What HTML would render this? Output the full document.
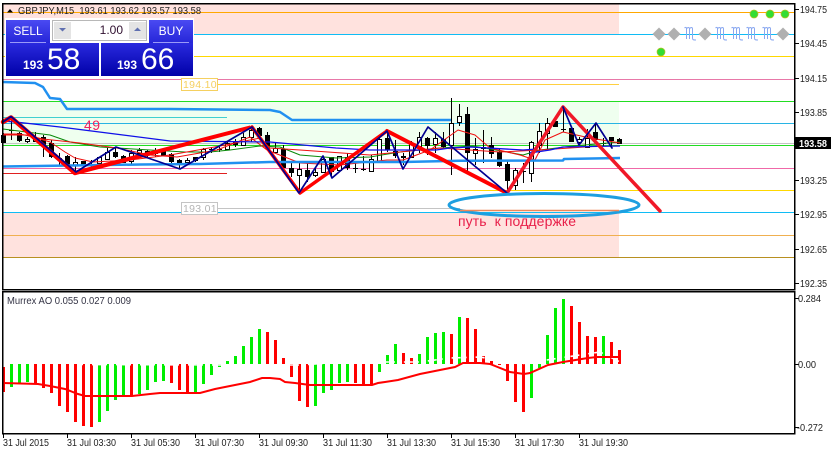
<!DOCTYPE html>
<html><head><meta charset="utf-8"><style>
html,body{margin:0;padding:0;background:#fff;width:833px;height:451px;overflow:hidden}
svg{display:block}
text{font-family:"Liberation Sans",sans-serif}
</style></head><body>
<svg width="833" height="451" viewBox="0 0 833 451" xmlns="http://www.w3.org/2000/svg">
<defs>
<linearGradient id="a" x1="0" y1="0" x2="0" y2="1"><stop offset="0" stop-color="#4a4af2"/><stop offset="1" stop-color="#2626d8"/></linearGradient>
<linearGradient id="b" x1="0" y1="0" x2="0" y2="1"><stop offset="0" stop-color="#2a2ade"/><stop offset="1" stop-color="#0000a8"/></linearGradient>
</defs>
<rect width="833" height="451" fill="#fff"/>
<g shape-rendering="crispEdges">
<rect x="3" y="4" width="616" height="30" fill="#ffe2de"/>
<rect x="3" y="212" width="616" height="46" fill="#ffe2de"/>
<rect x="3" y="101" width="616" height="44" fill="#efffef"/>
<g fill="none" stroke-width="1">
<path d="M3 12.5H794" stroke="#ffa800"/>
<path d="M3 34.5H794" stroke="#10bcf5"/>
<path d="M3 56.5H794" stroke="#ffd800"/>
<path d="M3 79.5H794" stroke="#e878a8"/>
<path d="M218 84.5H619" stroke="#ffd040"/>
<path d="M3 101.5H794" stroke="#22dd22"/>
<path d="M3 117.5H227" stroke="#40d0d0"/>
<path d="M3 123.5H794" stroke="#28b4e4"/>
<path d="M3 143.5H794" stroke="#c4c4c4"/>
<path d="M3 145.5H794" stroke="#22dd22"/>
<path d="M3 168.5H794" stroke="#f068a8"/>
<path d="M3 173.5H227" stroke="#e02020"/>
<path d="M3 190.5H794" stroke="#ffd800"/>
<path d="M218 208.5H460" stroke="#c4c4c4"/>
<path d="M3 212.5H794" stroke="#10bcf5"/>
<path d="M3 235.5H794" stroke="#f0b050"/>
<path d="M3 257.5H794" stroke="#b89020"/>
</g>
<path stroke="#000" fill="none" d="M3.5 133V143M11.5 117V140M19.5 132V142M27.5 137V143M35.5 132V142M43.5 135V157M51.5 140V158M59.5 153V165M67.5 155V167M75.5 157V172M83.5 161V168M91.5 160V169M99.5 157V165M107.5 148V160M115.5 147V158M123.5 155V163M131.5 150V165M139.5 148V155M147.5 150V157M155.5 148V157M163.5 150V156M171.5 153V163M179.5 159V168M187.5 158V163M195.5 157V162M203.5 148V160M211.5 147V153M219.5 147V152M227.5 142V150M235.5 139V147M243.5 133V146M251.5 127V142M259.5 127V137M267.5 132V150M275.5 142V153M283.5 145V168M291.5 162V177M299.5 162V190M307.5 163V182M315.5 167V177M323.5 156V172M331.5 157V178M339.5 156V170M347.5 153V170M355.5 163V173M363.5 156V171M371.5 155V172M379.5 138V162M387.5 132V152M395.5 140V158M403.5 153V165M411.5 141V158M419.5 132V153M427.5 137V155M435.5 132V153M443.5 132V148M451.5 98V175M459.5 104V126M467.5 107V172M475.5 138V165M483.5 130V163M491.5 137V158M499.5 148V167M507.5 160V192M515.5 168V190M523.5 163V183M531.5 141V182M539.5 123V153M547.5 118V150M555.5 117V127M563.5 107V132M571.5 128V142M579.5 137V145M587.5 129V147M595.5 123V140M603.5 138V146M611.5 137V147M619.5 138V144"/>
<path stroke="#000" stroke-width="5" fill="none" d="M3.5 135V143M11.5 130V131M19.5 133V141M43.5 137V145M51.5 143V157M59.5 158V159M67.5 156V165M83.5 161V165M91.5 164V165M115.5 152V157M123.5 156V163M147.5 151V155M155.5 153V154M163.5 151V156M171.5 154V162M179.5 160V164M195.5 157V161M211.5 149V150M219.5 149V150M235.5 141V145M259.5 128V136M267.5 135V149M283.5 149V168M291.5 168V173M307.5 170V177M331.5 157V172M347.5 157V168M355.5 168V169M363.5 169V170M387.5 138V150M395.5 151V156M403.5 156V158M427.5 138V146M443.5 139V147M467.5 114V153M483.5 147V149M491.5 145V154M499.5 152V166M507.5 164V181M523.5 171V172M555.5 121V127M563.5 129V130M571.5 128V142M595.5 132V140M603.5 143V144M611.5 137V141M619.5 139V144"/>
<path fill="#fff" stroke="#000" d="M25.5 139.5h4v2h-4zM33.5 138.5h4v3h-4zM73.5 162.5h4v3h-4zM97.5 157.5h4v6h-4zM105.5 152.5h4v7h-4zM129.5 153.5h4v8h-4zM137.5 150.5h4v3h-4zM185.5 160.5h4v2h-4zM201.5 149.5h4v8h-4zM225.5 143.5h4v6h-4zM241.5 137.5h4v8h-4zM249.5 130.5h4v7h-4zM273.5 148.5h4v4h-4zM297.5 169.5h4v6h-4zM313.5 172.5h4v3h-4zM321.5 159.5h4v13h-4zM337.5 156.5h4v14h-4zM369.5 159.5h4v12h-4zM377.5 139.5h4v22h-4zM409.5 144.5h4v13h-4zM417.5 137.5h4v9h-4zM433.5 138.5h4v6h-4zM449.5 123.5h4v22h-4zM457.5 116.5h4v6h-4zM473.5 149.5h4v4h-4zM513.5 170.5h4v15h-4zM529.5 142.5h4v31h-4zM537.5 131.5h4v14h-4zM545.5 123.5h4v10h-4zM577.5 139.5h4v3h-4zM585.5 138.5h4v9h-4z"/>
</g>
<g fill="none" stroke-linejoin="round">
<path stroke="#0a8a0a" d="M3 129L50 135 70 142 100 147 150 150 185 152 210 152 230 150 260 146 280 147 300 155 336 158 370 157 400 152 440 148 473 146 507 152 523 155 540 150 573 146 620 142"/>
<path stroke="#f01010" d="M3 134L20 134 43 139 80 143 117 148 150 155 177 157 217 150 250 137 267 150 300 163 340 165 387 160 403 160 430 150 458 130 475 135 490 148 520 155 535 160 545 140 563 132 590 138 620 143"/>
<path stroke="#f01010" d="M3 135L27 135 50 142 65 152 75 158 93 162 130 160 170 155 220 146 260 138 270 148 300 150 370 155 440 148 500 152 540 150 600 146"/>
<path stroke="#1010e8" stroke-width="1.3" d="M3 121L20 122.5 60 127 123 135 170 141 270 142 303 145 336 148 370 150 436 150 450 148 470 147 523 150 537 149 530 153 550 150 563 147 620 146"/>
<path stroke="#2090f0" stroke-width="2.5" d="M3 82L35 83 43 87 50 98 60 99 67 109 170 109 270 110 280 112 292 120 451 120"/>
<path stroke="#2090f0" stroke-width="2.5" d="M3 166.5L37 166 140 164.5 200 164 270 162 403 162 460 160.7 563 160.5 564 159 620 158"/>
</g>
<g fill="none" stroke-linejoin="round" stroke-linecap="round">
<path stroke="#ff0000" stroke-width="4.5" d="M3 122L11 117.5 75 173"/>
<path fill="#ff0000" stroke="none" d="M74 171L250 125.5 252 129 76 175z"/>
<path stroke="#ff0000" stroke-width="3.5" d="M252 127L300 193 387 131"/>
<path stroke="#ff0000" stroke-width="4" d="M387 131L507 193"/>
<path stroke="#f01828" stroke-width="3.5" d="M507 193L563 107 660 211"/>
<path stroke="#000090" stroke-width="1.7" d="M3 122L11 116.5 76 172 116 147 180 169 252 127 268 149 299 193 323 156 332 178 387 131 403 169 428 127 507 193"/>
<path stroke="#000090" stroke-width="1.7" d="M563 107L579 145 596 123 612 148"/>
<ellipse cx="544" cy="205" rx="95" ry="11.5" stroke="#1e9fe0" stroke-width="3"/>
</g>
<path d="M460 210.5H619" stroke="#f08858" stroke-width="1.5"/>
<text x="84" y="130" font-size="14" fill="#f02060" letter-spacing=".5">49</text>
<text x="458" y="226" font-size="14" fill="#e8204a" letter-spacing=".1" xml:space="preserve">путь  к поддержке</text>
<rect x="181.5" y="78.5" width="36" height="12" fill="#fff" stroke="#f5d060" shape-rendering="crispEdges"/>
<text x="183" y="88" font-size="10.5" fill="#f5d060" letter-spacing=".3">194.10</text>
<rect x="181.5" y="202.5" width="36" height="12" fill="#fff" stroke="#c4c4c4" shape-rendering="crispEdges"/>
<text x="183" y="212" font-size="10.5" fill="#b4b4b4" letter-spacing=".3">193.01</text>
<g fill="#33dd33" stroke="#b8c020" stroke-width=".7"><circle cx="754" cy="14" r="4"/><circle cx="770" cy="14" r="4"/><circle cx="785" cy="14" r="4"/><circle cx="661" cy="52" r="4"/></g>
<g fill="#b0b0b0"><path d="M659 27.5l6.5 6.5-6.5 6.5-6.5-6.5z"/><path d="M674 27.5l6.5 6.5-6.5 6.5-6.5-6.5z"/><path d="M705 27.5l6.5 6.5-6.5 6.5-6.5-6.5z"/><path d="M783 27.5l6.5 6.5-6.5 6.5-6.5-6.5z"/></g>
<g fill="none" stroke="#8aa8f0" stroke-width="1">
<path transform="translate(684 0)" d="M0.5 28c1-1 2-1 2 1V39M2.5 29c1-2 3-2 3 0V39M5.5 29c1-2 3-2 3 0V38c0 2 1 2 3.5 2"/>
<path transform="translate(715 0)" d="M0.5 28c1-1 2-1 2 1V39M2.5 29c1-2 3-2 3 0V39M5.5 29c1-2 3-2 3 0V38c0 2 1 2 3.5 2"/>
<path transform="translate(731 0)" d="M0.5 28c1-1 2-1 2 1V39M2.5 29c1-2 3-2 3 0V39M5.5 29c1-2 3-2 3 0V38c0 2 1 2 3.5 2"/>
<path transform="translate(746 0)" d="M0.5 28c1-1 2-1 2 1V39M2.5 29c1-2 3-2 3 0V39M5.5 29c1-2 3-2 3 0V38c0 2 1 2 3.5 2"/>
<path transform="translate(762 0)" d="M0.5 28c1-1 2-1 2 1V39M2.5 29c1-2 3-2 3 0V39M5.5 29c1-2 3-2 3 0V38c0 2 1 2 3.5 2"/>
</g>
<g shape-rendering="crispEdges">
<path d="M3.5 367V392M35.5 364V384M43.5 364V388M51.5 364V393M59.5 364V406M67.5 364V412M75.5 364V422M83.5 364V426M91.5 364V427M131.5 364V396M171.5 364V383M179.5 364V390M187.5 364V393M267.5 332V364M275.5 340V364M283.5 358V364M291.5 364V377M299.5 364V401M307.5 364V407M355.5 364V383M363.5 364V384M371.5 364V385M403.5 353V364M411.5 358V364M451.5 334V364M467.5 318V364M475.5 329V364M483.5 356V364M491.5 361V364M499.5 364V365M507.5 364V381M515.5 364V402M523.5 364V412M571.5 306V364M579.5 322V364M587.5 336V364M595.5 337V364M611.5 342V364M619.5 350V364" stroke="#ff0000" stroke-width="3" fill="none"/>
<path d="M11.5 364V387M19.5 364V383M27.5 364V382M99.5 364V422M107.5 364V411M115.5 364V400M123.5 364V396M139.5 364V394M147.5 364V390M155.5 364V382M163.5 364V381M195.5 364V392M203.5 364V384M211.5 364V375M219.5 364V367M227.5 361V364M235.5 356V364M243.5 346V364M251.5 337V364M259.5 329V364M315.5 364V406M323.5 364V393M331.5 364V390M339.5 364V383M347.5 364V382M379.5 364V372M387.5 355V364M395.5 344V364M419.5 354V364M427.5 337V364M435.5 333V364M443.5 332V364M459.5 317V364M531.5 364V398M539.5 364V368M547.5 335V364M555.5 308V364M563.5 299V364M603.5 336V364" stroke="#00ee00" stroke-width="3" fill="none"/>
</g>
<path d="M80 364.5L240 365 300 365 345 362 420 362 450 358 480 357 520 364 600 352 620 362" fill="none" stroke="#fff" stroke-width="1.6" stroke-dasharray="3 3"/>
<path d="M3 383L38 384 50 386 65 389 78 394 85 396 132 396 150 394 160 393 200 393 215 389 225 387 240 384 250 382 262 378 270 378 280 379 285 382 295 383 310 385 372 385 378 383 385 382 398 380 420 374 440 370 455 367 463 363 480 363 490 364 510 372 524 374 530 373 548 365 563 362 588 358 597 357 620 357" fill="none" stroke="#ff0000" stroke-width="2"/>
<g shape-rendering="crispEdges" stroke="#000" fill="none">
<path stroke-width="1.5" d="M2.5 3.5H794.5V289.5H2.5ZM2.5 291.5H794.5V433.5H2.5Z"/>
<path d="M795 9.5h4M795 43.5h4M795 78.5h4M795 112.5h4M795 180.5h4M795 214.5h4M795 249.5h4M795 283.5h4M795 298.5h4M795 364.5h4M795 427.5h4"/>
<path d="M3.5 434v4M67.5 434v4M131.5 434v4M195.5 434v4M259.5 434v4M323.5 434v4M387.5 434v4M451.5 434v4M515.5 434v4M579.5 434v4"/>
</g>
<g font-size="10" fill="#222">
<text x="800" y="13" textLength="27" lengthAdjust="spacingAndGlyphs">194.75</text><text x="800" y="47" textLength="27" lengthAdjust="spacingAndGlyphs">194.45</text><text x="800" y="82" textLength="27" lengthAdjust="spacingAndGlyphs">194.15</text><text x="800" y="116" textLength="27" lengthAdjust="spacingAndGlyphs">193.85</text><text x="800" y="184" textLength="27" lengthAdjust="spacingAndGlyphs">193.25</text><text x="800" y="218" textLength="27" lengthAdjust="spacingAndGlyphs">192.95</text><text x="800" y="253" textLength="27" lengthAdjust="spacingAndGlyphs">192.65</text><text x="800" y="287" textLength="27" lengthAdjust="spacingAndGlyphs">192.35</text>
<text x="798" y="302" textLength="23" lengthAdjust="spacingAndGlyphs">0.284</text><text x="798" y="368" textLength="18" lengthAdjust="spacingAndGlyphs">0.00</text><text x="797" y="431" textLength="26" lengthAdjust="spacingAndGlyphs">-0.272</text>
<text x="3" y="446" textLength="46" lengthAdjust="spacingAndGlyphs">31 Jul 2015</text><text x="67" y="446" textLength="49" lengthAdjust="spacingAndGlyphs">31 Jul 03:30</text><text x="131" y="446" textLength="49" lengthAdjust="spacingAndGlyphs">31 Jul 05:30</text><text x="195" y="446" textLength="49" lengthAdjust="spacingAndGlyphs">31 Jul 07:30</text><text x="259" y="446" textLength="49" lengthAdjust="spacingAndGlyphs">31 Jul 09:30</text><text x="323" y="446" textLength="49" lengthAdjust="spacingAndGlyphs">31 Jul 11:30</text><text x="387" y="446" textLength="49" lengthAdjust="spacingAndGlyphs">31 Jul 13:30</text><text x="451" y="446" textLength="49" lengthAdjust="spacingAndGlyphs">31 Jul 15:30</text><text x="515" y="446" textLength="49" lengthAdjust="spacingAndGlyphs">31 Jul 17:30</text><text x="579" y="446" textLength="49" lengthAdjust="spacingAndGlyphs">31 Jul 19:30</text>
<text x="7" y="304" fill="#334" textLength="124" lengthAdjust="spacingAndGlyphs">Murrex AO 0.055 0.027 0.009</text>
<text x="18" y="14" xml:space="preserve" textLength="183" lengthAdjust="spacingAndGlyphs">GBPJPY,M15  193.61 193.62 193.57 193.58</text>
</g>
<path d="M7 12.5l3-3.5 3 3.5z" fill="#000"/>
<rect x="795" y="137" width="36" height="12" fill="#000"/>
<text x="799" y="147" font-size="10" font-weight="bold" fill="#fff" textLength="28" lengthAdjust="spacingAndGlyphs">193.58</text>
<rect x="5" y="18" width="189" height="59" fill="#fff"/>
<rect x="6" y="20" width="44" height="23" fill="url(#a)"/>
<rect x="149" y="20" width="44" height="23" fill="url(#a)"/>
<rect x="6" y="43" width="93" height="33" fill="url(#b)"/>
<rect x="101" y="43" width="92" height="33" fill="url(#b)"/>
<path d="M10 42.5H46M153 42.5H189" stroke="#9a9af8" shape-rendering="crispEdges"/>
<rect x="52.5" y="20.5" width="94" height="20" fill="#fff" stroke="#b8b8b8" shape-rendering="crispEdges"/>
<rect x="54" y="22" width="17" height="17" fill="#e4e4e4"/>
<rect x="129" y="22" width="17" height="17" fill="#e4e4e4"/>
<path d="M59 28h7l-3.5 3.5z" fill="#6070b0"/>
<path d="M134 31h7l-3.5-3.5z" fill="#6070b0"/>
<text x="123" y="34" font-size="12" fill="#301030" text-anchor="end">1.00</text>
<text x="28" y="35" font-size="12" fill="#fff" text-anchor="middle">SELL</text>
<text x="171" y="35" font-size="12" fill="#fff" text-anchor="middle">BUY</text>
<text x="23" y="69" font-size="12" font-weight="bold" fill="#fff">193</text>
<text x="47" y="69" font-size="30" fill="#fff">58</text>
<text x="117" y="69" font-size="12" font-weight="bold" fill="#fff">193</text>
<text x="141" y="69" font-size="30" fill="#fff">66</text>
</svg>
</body></html>
